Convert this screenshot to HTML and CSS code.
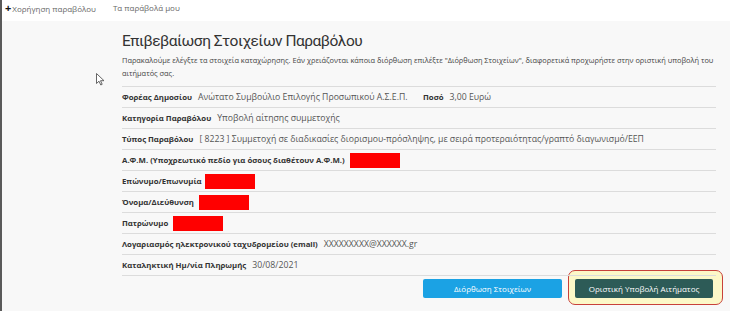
FILE: index.html
```html
<!DOCTYPE html>
<html lang="el">
<head>
<meta charset="utf-8">
<link rel="stylesheet" href="styles.css">
</head>
<body>
<div class="edge"></div>
<nav class="topnav">
  <a class="navlink"><span class="plus">+</span>Χορήγηση παραβόλου</a>
  <a class="navlink">Τα παράβολά μου</a>
</nav>
<main class="page">
  <h1 class="title">Επιβεβαίωση Στοιχείων Παραβόλου</h1>
  <p class="intro">Παρακαλούμε ελέγξτε τα στοιχεία καταχώρησης. Εάν χρειάζονται κάποια διόρθωση επιλέξτε "Διόρθωση Στοιχείων", διαφορετικά προχωρήστε στην οριστική υποβολή του αιτήματός σας.</p>
  <div class="rows">
    <div class="row split">
      <div class="cell"><b>Φορέας Δημοσίου</b><span class="val">Ανώτατο Συμβούλιο Επιλογής Προσωπικού Α.Σ.Ε.Π.</span></div>
      <div class="cell"><b>Ποσό</b><span class="val">3,00 Ευρώ</span></div>
    </div>
    <div class="row"><b>Κατηγορία Παραβόλου</b><span class="val">Υποβολή αίτησης συμμετοχής</span></div>
    <div class="row"><b>Τύπος Παραβόλου</b><span class="val">[ 8223 ] Συμμετοχή σε διαδικασίες διορισμου-πρόσληψης, με σειρά προτεραιότητας/γραπτό διαγωνισμό/ΕΕΠ</span></div>
    <div class="row"><b>Α.Φ.Μ. (Υποχρεωτικό πεδίο για όσους διαθέτουν Α.Φ.Μ.)</b><span class="redact"></span></div>
    <div class="row"><b>Επώνυμο/Επωνυμία</b><span class="redact tight"></span></div>
    <div class="row"><b>Όνομα/Διεύθυνση</b><span class="redact"></span></div>
    <div class="row"><b>Πατρώνυμο</b><span class="redact"></span></div>
    <div class="row"><b>Λογαριασμός ηλεκτρονικού ταχυδρομείου (email)</b><span class="val">XXXXXXXXX@XXXXXX.gr</span></div>
    <div class="row"><b>Καταληκτική Ημ/νία Πληρωμής</b><span class="val">30/08/2021</span></div>
  </div>
  <div class="actions">
    <button class="btn btn-edit">Διόρθωση Στοιχείων</button>
    <span class="highlight"><button class="btn btn-submit">Οριστική Υποβολή Αιτήματος</button></span>
  </div>
</main>
<svg class="cursor" width="9" height="13" viewBox="0 0 9 13"><path d="M0.5 0.5 L0.5 10.5 L3 8.2 L4.8 12 L6.2 11.3 L4.5 7.7 L8 7.7 Z" fill="#fff" stroke="#555" stroke-width="0.9" stroke-linejoin="round"/></svg>
</body>
</html>
```
FILE: styles.css
```css
html, body {
  margin: 0;
  padding: 0;
}
body {
  background: #f8f8f8;
  font-family: "Open Sans", "Noto Sans", sans-serif;
  color: #333;
  width: 730px;
  height: 311px;
  overflow: hidden;
  position: relative;
}
.edge {
  position: absolute;
  left: 0;
  top: 0;
  width: 2px;
  height: 311px;
  background: #5a5a5a;
}
.topnav {
  height: 21px;
  background: #fff;
  display: flex;
  align-items: flex-start;
  gap: 17px;
  padding-left: 5px;
  padding-top: 2px;
  box-sizing: border-box;
}
.navlink {
  font-size: 8px;
  line-height: 12px;
  color: #666;
}
.plus {
  color: #111;
  font-weight: 700;
  font-size: 11px;
  margin-right: 1px;
}
.page {
  margin-left: 122px;
  width: 594px;
}
.title {
  font-family: Roboto, "Open Sans", sans-serif;
  font-weight: 400;
  font-size: 15.5px;
  letter-spacing: -0.5px;
  color: #333;
  margin: 10px 0 0;
  line-height: 20px;
}
.intro {
  font-size: 7.4px;
  line-height: 13px;
  color: #444;
  margin: 3px 0 0;
  padding-bottom: 6px;
  border-bottom: 1px solid #dcdcdc;
}
.rows {
  font-size: 8.7px;
}
.row {
  display: flex;
  align-items: center;
  height: 20px;
  border-bottom: 1px solid #dcdcdc;
  white-space: nowrap;
}
.row b, .cell b {
  font-weight: 700;
  font-size: 7.8px;
  color: #333;
}
.val {
  margin-left: 6px;
  color: #555;
}
.split {
  display: grid;
  grid-template-columns: 301px 1fr;
}
.cell {
  display: flex;
  align-items: center;
}
.redact {
  display: inline-block;
  width: 50px;
  height: 15px;
  background: #f00;
  margin-left: 5px;
}
.redact.tight {
  margin-left: 3px;
}
.actions {
  display: flex;
  justify-content: flex-end;
  gap: 13px;
  margin-top: 3px;
  padding-right: 3px;
}
.btn {
  font-family: "Open Sans", "Noto Sans", sans-serif;
  font-size: 8px;
  color: #fff;
  border: none;
  border-radius: 2px;
  height: 19px;
  width: 139px;
  padding: 0;
}
.btn-edit {
  background: #1ba2e4;
}
.btn-submit {
  background: #2d5b57;
  width: 138px;
}
.highlight {
  position: relative;
  display: inline-flex;
}
.highlight::before {
  content: "";
  position: absolute;
  left: -7px;
  top: -9px;
  right: -10px;
  bottom: -7px;
  background: #fcf8c8;
  border: 1.5px solid #c8413b;
  border-radius: 7px;
  z-index: -1;
}
.highlight .btn {
  position: relative;
}
.cursor {
  position: absolute;
  left: 96px;
  top: 73px;
}
```
